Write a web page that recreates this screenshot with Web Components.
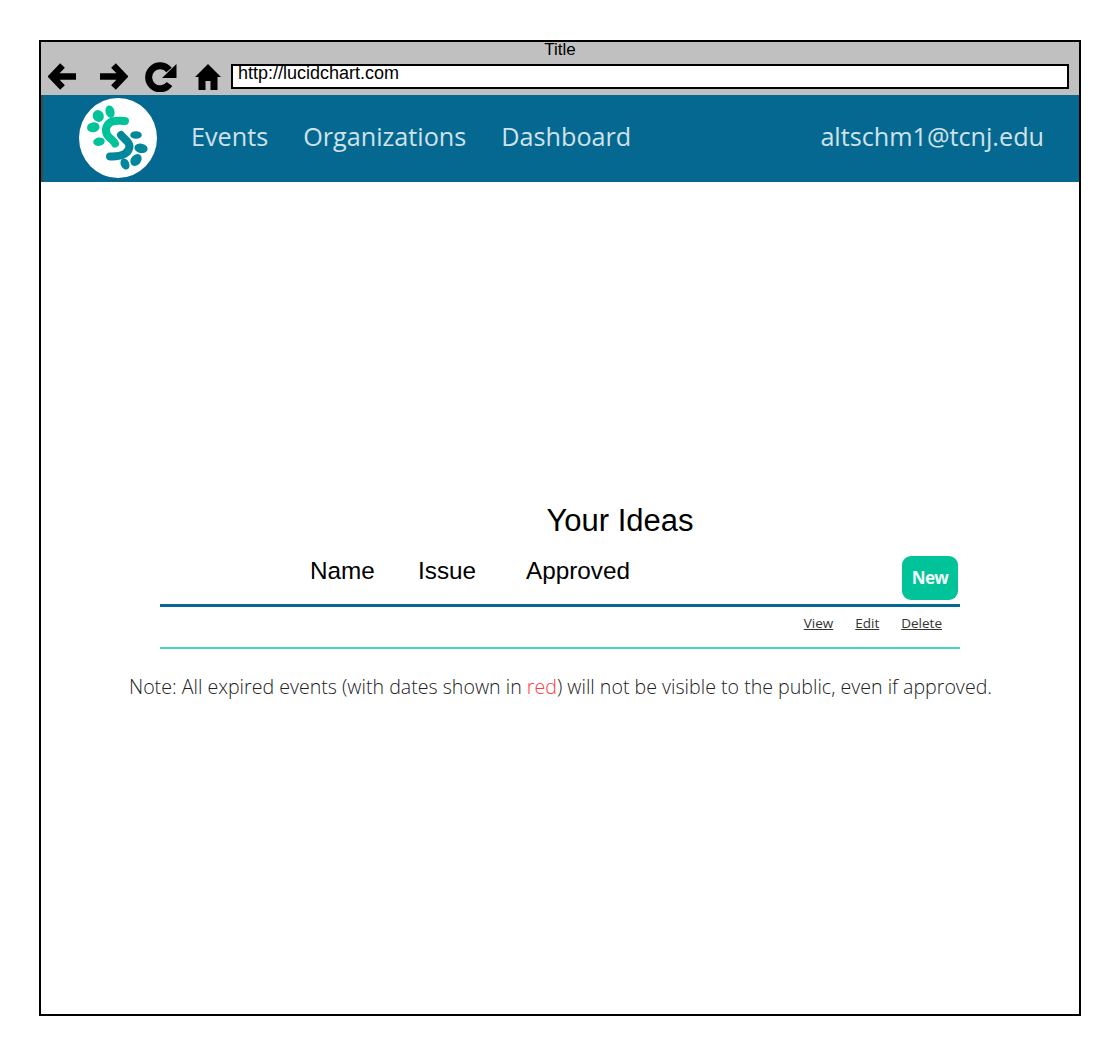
<!DOCTYPE html>
<html>
<head>
<meta charset="utf-8">
<title>Your Ideas</title>
<style>
  html, body { margin: 0; padding: 0; background: white; }
  body { padding: 40px 39px 39px 39px; font-family: "Liberation Sans", Arial, sans-serif; }
</style>
</head>
<body>
<browser-frame url="http://lucidchart.com" heading="Title">
  <site-nav user="altschm1@tcnj.edu"></site-nav>
  <ideas-panel></ideas-panel>
</browser-frame>

<script>
class BrowserFrame extends HTMLElement {
  connectedCallback() {
    this.attachShadow({ mode: "open" });
    this.shadowRoot.innerHTML = `
      <style>
        :host {
          display: block;
          width: 1042px;
          height: 976px;
          box-sizing: border-box;
          border: 2px solid #000;
          background: #fff;
          font-family: "Liberation Sans", Arial, sans-serif;
        }
        .chrome {
          background: #c0c0c0;
          height: 53px;
          box-sizing: border-box;
        }
        .title {
          text-align: center;
          font-size: 17px;
          line-height: 16px;
          height: 20px;
          color: #000;
        }
        .tools {
          display: flex;
          align-items: center;
          height: 29px;
          padding-left: 7px;
        }
        svg { display: block; flex: none; }
        .url {
          flex: 1;
          margin: 0 10px 0 10px;
          height: 25px;
          box-sizing: border-box;
          border: 2px solid #000;
          background: #fff;
          font-size: 18px;
          line-height: 15px;
          padding-left: 5px;
          color: #000;
        }
      </style>
      <div class="chrome">
        <div class="title">${this.getAttribute("heading")}</div>
        <div class="tools">
          <svg width="28" height="27" viewBox="0 0 28 27"><path d="M14.500 2.500 L4 13.500 L14.500 24.500 M6 13.500 H28" fill="none" stroke="#000" stroke-width="6.500"/></svg>
          <svg width="28" height="27" viewBox="0 0 28 27" style="margin-left:24px"><path d="M13.500 2.500 L24 13.500 L13.500 24.500 M0 13.500 H22" fill="none" stroke="#000" stroke-width="6.500"/></svg>
          <svg width="32" height="30" viewBox="0 0 32 30" style="margin-left:17px"><path d="M24.500 22 A11.500 11.500 0 1 1 24 8" fill="none" stroke="#000" stroke-width="7"/><path d="M31.500 2 V16 H17 Z" fill="#000"/></svg>
          <svg width="26" height="26" viewBox="0 0 26 26" style="margin:1px 0 0 18px"><path d="M13 0 L26 13 H22.500 V26 H15.500 V17 H10.500 V26 H3.500 V13 H0 Z" fill="#000"/></svg>
          <div class="url">${this.getAttribute("url")}</div>
        </div>
      </div>
      <slot></slot>
    `;
  }
}
customElements.define("browser-frame", BrowserFrame);

class SiteNav extends HTMLElement {
  connectedCallback() {
    this.attachShadow({ mode: "open" });
    this.shadowRoot.innerHTML = `
      <style>
        :host {
          display: flex;
          align-items: center;
          height: 87px;
          box-sizing: border-box;
          background: #056890;
          border-left: 2px solid #3c4a50;
          padding: 0 35px 0 36px;
          font-family: "Open Sans", sans-serif;
          font-weight: 400;
          font-size: 25.200px;
          color: #cfe2ea;
        }
        svg { display: block; flex: none; margin: -1px 35px 0 0; }
        ul {
          display: flex;
          gap: 35px;
          list-style: none;
          margin: -5px 0 0 -1px;
          padding: 0;
          flex: 1;
        }
        span { margin-top: -5px; }
      </style>
      <svg width="78" height="80" viewBox="0 0 78 80">
        <ellipse cx="39" cy="40" rx="39" ry="40" fill="#fff"/>
        <g fill="#00c39a">
          <ellipse cx="19.300" cy="18" rx="5.500" ry="6" transform="rotate(-30 19.300 18)"/>
          <ellipse cx="31" cy="13.700" rx="4.500" ry="6.300" transform="rotate(-15 31 13.700)"/>
          <ellipse cx="14.300" cy="29.300" rx="6.300" ry="5" transform="rotate(-10 14.300 29.300)"/>
          <ellipse cx="20" cy="43.700" rx="5.800" ry="4.200" transform="rotate(-10 20 43.700)"/>
        </g>
        <path d="M46 23 C40 22.500 34 22.500 31 24.500 C26 28 26 34 29 38 C32 41.500 35 43 36 45.500" fill="none" stroke="#00c39a" stroke-width="8" stroke-linecap="round"/>
        <g fill="#03889b">
          <ellipse cx="57" cy="37" rx="5.800" ry="3.800"/>
          <ellipse cx="62" cy="50.300" rx="6.700" ry="4.700" transform="rotate(10 62 50.300)"/>
          <ellipse cx="57" cy="62" rx="5" ry="6.500" transform="rotate(40 57 62)"/>
          <ellipse cx="46" cy="66" rx="4.200" ry="5.800" transform="rotate(-25 46 66)"/>
        </g>
        <path d="M42 37 C44 40 50 43 50.500 48 C50.500 54 45 59 31 58.500" fill="none" stroke="#03889b" stroke-width="8" stroke-linecap="round"/>
      </svg>
      <ul>
        <li>Events</li>
        <li>Organizations</li>
        <li>Dashboard</li>
      </ul>
      <span>${this.getAttribute("user")}</span>
    `;
  }
}
customElements.define("site-nav", SiteNav);

class IdeasPanel extends HTMLElement {
  connectedCallback() {
    this.attachShadow({ mode: "open" });
    this.shadowRoot.innerHTML = `
      <style>
        :host {
          display: block;
          padding: 321px 0 0 119px;
          font-family: "Liberation Sans", Arial, sans-serif;
          color: #000;
        }
        h1 {
          margin: 0;
          width: 920px;
          text-align: center;
          font-weight: 400;
          font-size: 31px;
          line-height: 36px;
        }
        .table { width: 800px; }
        .head {
          display: flex;
          align-items: flex-start;
          height: 48px;
          padding: 0 2px 0 150px;
          border-bottom: 3px solid #056890;
          font-size: 24.300px;
          line-height: 30px;
          margin-top: 17px;
        }
        .head span:nth-child(1) { width: 108px; }
        .head span:nth-child(2) { width: 108px; }
        .head span:nth-child(3) { flex: 1; }
        .new {
          width: 56px;
          height: 44px;
          border-radius: 9px;
          background: #00c39a;
          color: #f2fbf8;
          font-family: "Open Sans", sans-serif;
          font-weight: 700;
          font-size: 17px;
          letter-spacing: -0.6px;
          line-height: 44px;
          text-align: center;
        }
        .row {
          display: flex;
          justify-content: flex-end;
          gap: 22px;
          height: 40px;
          padding-right: 18px;
          border-bottom: 2px solid #45d8b8;
          font-family: "Open Sans", sans-serif;
          font-weight: 400;
          font-size: 13.500px;
          line-height: 32px;
        }
        .row a { color: #333; text-decoration: underline; }
        .note {
          width: 882px;
          margin: 23px 0 0 -40.500px;
          text-align: center;
          font-family: "Open Sans", sans-serif;
          font-weight: 300;
          font-size: 19.600px;
          line-height: 30px;
          color: #222;
          white-space: nowrap;
        }
        .note b { font-weight: 300; color: #ff3b47; }
      </style>
      <h1>Your Ideas</h1>
      <div class="table">
        <div class="head">
          <span>Name</span><span>Issue</span><span>Approved</span>
          <div class="new">New</div>
        </div>
        <div class="row"><a>View</a><a>Edit</a><a>Delete</a></div>
      </div>
      <div class="note">Note: All expired events (with dates shown in <b>red</b>) will not be visible to the public, even if approved.</div>
    `;
  }
}
customElements.define("ideas-panel", IdeasPanel);
</script>
</body>
</html>
